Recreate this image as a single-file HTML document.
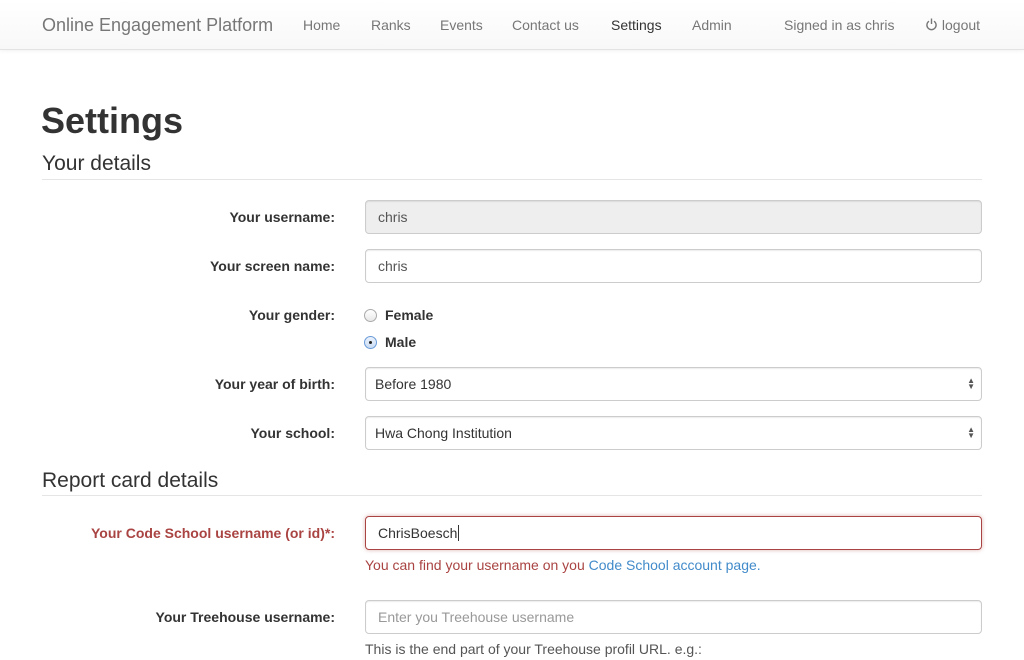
<!DOCTYPE html>
<html><head><style>
*{box-sizing:border-box}
body{margin:0;width:1024px;height:660px;overflow:hidden;background:#fff;font-family:"Liberation Sans",Arial,sans-serif;font-size:14px;color:#333;position:relative}
.nav{position:absolute;left:0;top:0;width:1024px;height:50px;background:linear-gradient(#fff,#f8f8f8);border-bottom:1px solid #e3e3e3;box-shadow:0 1px 4px rgba(0,0,0,.06)}
.a{position:absolute;top:16px;color:#777;font-size:14px;line-height:18px}
.t{position:absolute;white-space:nowrap}
.lbl{position:absolute;right:689px;font-weight:bold;font-size:14px;white-space:nowrap}
.in{position:absolute;left:365px;width:617px;height:34px;border:1px solid #ccc;border-radius:4px;box-shadow:inset 0 1px 1px rgba(0,0,0,.075);padding:0 12px;line-height:32px;font-size:14px;color:#555}
.arr{position:absolute;right:6px;top:10px;font-size:8px;line-height:6px;color:#555}
.hr{position:absolute;left:42px;width:940px;height:1px;background:#e5e5e5}
.rad{position:absolute;left:364px;width:13px;height:13px;border-radius:50%;border:1px solid #aaa;background:linear-gradient(#fff,#e8e8e8)}
</style></head><body>
<div class="nav">
<div class="a" style="left:42px;top:15px;font-size:18px;line-height:20px">Online Engagement Platform</div>
<div class="a" style="left:303px">Home</div>
<div class="a" style="left:371px">Ranks</div>
<div class="a" style="left:440px">Events</div>
<div class="a" style="left:512px">Contact us</div>
<div class="a" style="left:611px;color:#333">Settings</div>
<div class="a" style="left:692px">Admin</div>
<div class="a" style="left:784px">Signed in as chris</div>
<div class="a" style="left:925px"><svg width="13" height="13" viewBox="0 0 13 13" style="vertical-align:-1px"><path d="M4 3.2A4.6 4.6 0 1 0 9 3.2" fill="none" stroke="#777" stroke-width="1.4"/><line x1="6.5" y1="0.5" x2="6.5" y2="6" stroke="#777" stroke-width="1.4"/></svg> logout</div>
</div>
<div class="t" style="left:41px;top:100px;font-size:36px;font-weight:bold;line-height:42px">Settings</div>
<div class="t" style="left:42px;top:152px;font-size:21px;line-height:24px">Your details</div>
<div class="hr" style="top:179px"></div>
<div class="lbl" style="top:209px">Your username:</div>
<div class="in" style="top:200px;background:#eee">chris</div>
<div class="lbl" style="top:258px">Your screen name:</div>
<div class="in" style="top:249px">chris</div>
<div class="lbl" style="top:307px">Your gender:</div>
<div class="rad" style="top:309px"></div>
<div class="t" style="left:385px;top:307px;font-weight:bold">Female</div>
<div class="rad" style="top:336px;border-color:#6a9bd8;background:linear-gradient(#eaf2fc,#c9dcf3)"><div style="position:absolute;left:4px;top:4px;width:3px;height:3px;border-radius:50%;background:#222"></div></div>
<div class="t" style="left:385px;top:334px;font-weight:bold">Male</div>
<div class="lbl" style="top:376px">Your year of birth:</div>
<div class="in" style="top:367px;padding-left:9px;color:#333">Before 1980<div class="arr">▲<br>▼</div></div>
<div class="lbl" style="top:425px">Your school:</div>
<div class="in" style="top:416px;padding-left:9px;color:#333">Hwa Chong Institution<div class="arr">▲<br>▼</div></div>
<div class="t" style="left:42px;top:469px;font-size:21px;line-height:24px">Report card details</div>
<div class="hr" style="top:495px"></div>
<div class="lbl" style="top:525px;color:#a94442">Your Code School username (or id)*:</div>
<div class="in" style="top:516px;border-color:#a94442;box-shadow:0 0 4px rgba(169,68,66,.4);color:#333">ChrisBoesch<span style="border-left:1px solid #333;margin-left:1px"></span></div>
<div class="t" style="left:365px;top:557px;color:#a94442">You can find your username on you <span style="color:#428bca">Code School account page.</span></div>
<div class="lbl" style="top:609px">Your Treehouse username:</div>
<div class="in" style="top:600px;color:#999">Enter you Treehouse username</div>
<div class="t" style="left:365px;top:641px;color:#555">This is the end part of your Treehouse profil URL. e.g.:</div>
</body></html>
